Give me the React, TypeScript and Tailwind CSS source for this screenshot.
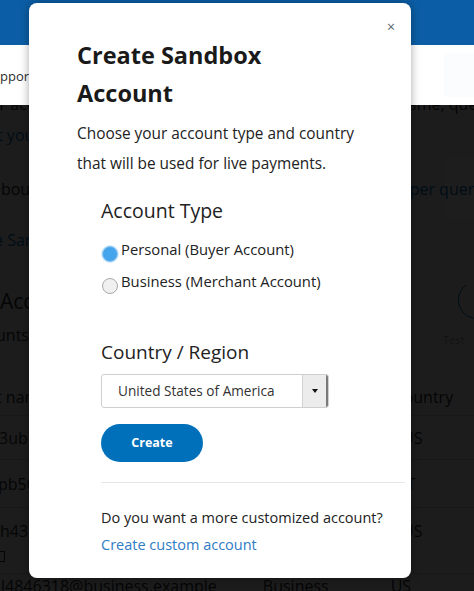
import React from "react";

const font = { fontFamily: "'Open Sans', Lato, sans-serif" };

function Row({
  h,
  left,
  right,
  border = false,
}: {
  h: string;
  left?: React.ReactNode;
  right?: React.ReactNode;
  border?: boolean;
}) {
  return (
    <div className={`flex items-center ${h} ${border ? "border-b border-[#d4d4d4]" : ""}`}>
      <div className="w-[400px] shrink-0 whitespace-nowrap overflow-hidden">{left}</div>
      <div className="flex-1 min-w-0 whitespace-nowrap overflow-hidden">{right}</div>
    </div>
  );
}

export default function App() {
  return (
    <div className="relative w-[474px] h-[591px] overflow-hidden bg-[#f5f7fa]" style={font}>
      {/* header */}
      <div className="relative z-10 h-[45px] bg-[#0b5ea6]" />
      <div className="relative z-10 h-[60px] bg-white flex items-center">
        <span className="mt-[4px] text-[13px] text-[#2c2e2f] -ml-[15px]">Support</span>
        <div className="ml-auto w-[30px] h-[44px] bg-[#fbfcfe]" />
      </div>

      {/* page content (under the backdrop) */}
      <div className="-mt-[13px] text-[16px] text-[#2c2e2f]">
        <Row h="h-[24px]" left={<span className="-ml-[20px] block">our account</span>} right={<span className="block -ml-[2px]">name, query</span>} />
        <div className="h-[7px]" />
        <Row h="h-[24px]" left={<span className="-ml-[3px] block text-[#0070ba]">t your</span>} />
        <div className="h-[11px]" />
        <div className="flex items-center h-[62px]">
          <div className="w-[400px] shrink-0 whitespace-nowrap overflow-hidden">
            <span className="block -ml-[8px]">about</span>
          </div>
          <div className="flex-1 min-w-0 h-full grid overflow-hidden whitespace-nowrap">
            <div className="col-start-1 row-start-1 ml-[44px] bg-white" />
            <span className="col-start-1 row-start-1 self-center text-[#0070ba]">oper query</span>
          </div>
        </div>
        <div className="h-[8px]" />
        <Row h="h-[24px]" left={<span className="-ml-[6px] block text-[#0070ba]">e Sandbox</span>} />
        <div className="h-[29px]" />
        <div className="flex items-center h-[42px]">
          <div className="w-[400px] shrink-0 whitespace-nowrap overflow-hidden">
            <span className="block text-[21px]">Accounts</span>
          </div>
          <div className="flex-1 min-w-0 flex items-center overflow-hidden">
            <div className="ml-[58px] -mt-[4px] w-[38px] h-[38px] rounded-full border-[1.5px] border-[#0070ba] shrink-0" />
          </div>
        </div>
        <Row h="h-[24px]" left={<span className="-ml-[4px] block">unts: 3</span>} right={<span className="block mt-[10px] ml-[43px] text-[11px] text-[#9aa0a6]">Test</span>} />
        <div className="h-[32px]" />
        <Row h="h-[36px]" left={<span className="-ml-[4px] block">t name</span>} right={<span className="block -ml-[4px]">country</span>} />
        <div className="border-b border-[#d4d4d4]" />
        <Row h="h-[44px]" left={<span className="-ml-[1px] block">3ub1</span>} right={<span className="block ml-[2px]">US</span>} border />
        <Row h="h-[48px]" left={<span className="-ml-[2px] block">pb50</span>} right={<span className="block ml-[2px]">IT</span>} border />
        <div className="flex h-[66px] border-b border-[#d4d4d4]">
          <div className="w-[400px] shrink-0 whitespace-nowrap overflow-hidden pt-[11px]">
            <span className="block leading-[24px]">h43</span>
            <span className="block w-[7px] h-[11px] border border-[#2c2e2f] mt-[8px] ml-[-2px]" />
          </div>
          <div className="flex-1 min-w-0 pt-[11px]">
            <span className="block ml-[2px] leading-[24px]">US</span>
          </div>
        </div>
        <div className="flex items-center h-[24px]">
          <span className="ml-[1px] whitespace-nowrap">l4846318@business.example</span>
          <span className="ml-[46px]">Business</span>
          <span className="ml-[62px]">US</span>
        </div>
      </div>

      {/* backdrop */}
      <div className="absolute left-0 right-0 top-[105px] bottom-0 z-[5] bg-black/[0.885]" />

      {/* modal */}
      <div className="absolute z-20 left-[29px] top-[3px] w-[382px] h-[575px] bg-white rounded-[8px] shadow-[0_0_10px_rgba(0,0,0,0.35)]">
        <button className="absolute right-[16px] top-[17px] text-[14px] leading-none text-[#5a6470]">×</button>
        <div className="pl-[48px] pr-[6px] pt-[33px]">
          <h1 className="text-[23.5px] font-bold leading-[38px] text-[#1a1a1a]">
            Create Sandbox
            <br />
            Account
          </h1>
          <p className="mt-[7px] text-[15.4px] leading-[30px] text-[#222]">
            Choose your account type and country
            <br />
            that will be used for live payments.
          </p>
        </div>
        <div className="pl-[72px] pr-[6px]">
          <h2 className="mt-[20px] text-[19.5px] leading-[24px] text-[#222]">Account Type</h2>
          <div className="mt-[17px] flex flex-col gap-[13px]">
            <label className="flex items-start h-[19px]">
              <span className="ml-[1px] mt-[6px] w-[16px] h-[16px] rounded-full bg-[#44a5ec] border border-[#8ec6f2] shadow-[0_0_0_1px_#d7ebfb]" />
              <span className="ml-[3px] text-[14.8px] leading-[19px] text-[#222]">Personal (Buyer Account)</span>
            </label>
            <label className="flex items-start h-[19px]">
              <span className="ml-[1px] mt-[6px] w-[16px] h-[16px] rounded-full bg-[#f0f0f0] border border-[#a9a9a9]" />
              <span className="ml-[3px] text-[14.8px] leading-[19px] text-[#222]">Business (Merchant Account)</span>
            </label>
          </div>
          <h2 className="mt-[49px] text-[19px] leading-[24px] text-[#222]">Country / Region</h2>
          <div className="mt-[10px] flex w-[228px] h-[34px] border border-[#cfcfcf] rounded-[3px] overflow-hidden">
            <div className="flex-1 flex items-center pl-[16px] text-[13.6px] text-[#333]">United States of America</div>
            <div className="w-[26px] flex items-center justify-center bg-[#ececec] border-l border-[#d2d2d2] border-r-2 border-r-[#7a7a7a]">
              <span className="w-0 h-0 border-l-[3.5px] border-r-[3.5px] border-t-[4px] border-l-transparent border-r-transparent border-t-[#111]" />
            </div>
          </div>
          <button className="mt-[16px] w-[102px] h-[38px] rounded-full bg-[#0070ba] text-white text-[12.5px] font-bold">Create</button>
          <div className="mt-[20px] border-t border-[#e6e6e6]" />
          <p className="mt-[25px] text-[14.5px] leading-[20px] text-[#222]">Do you want a more customized account?</p>
          <a className="block mt-[7px] text-[14.5px] leading-[20px] text-[#2f7bc4]">Create custom account</a>
        </div>
      </div>
    </div>
  );
}
